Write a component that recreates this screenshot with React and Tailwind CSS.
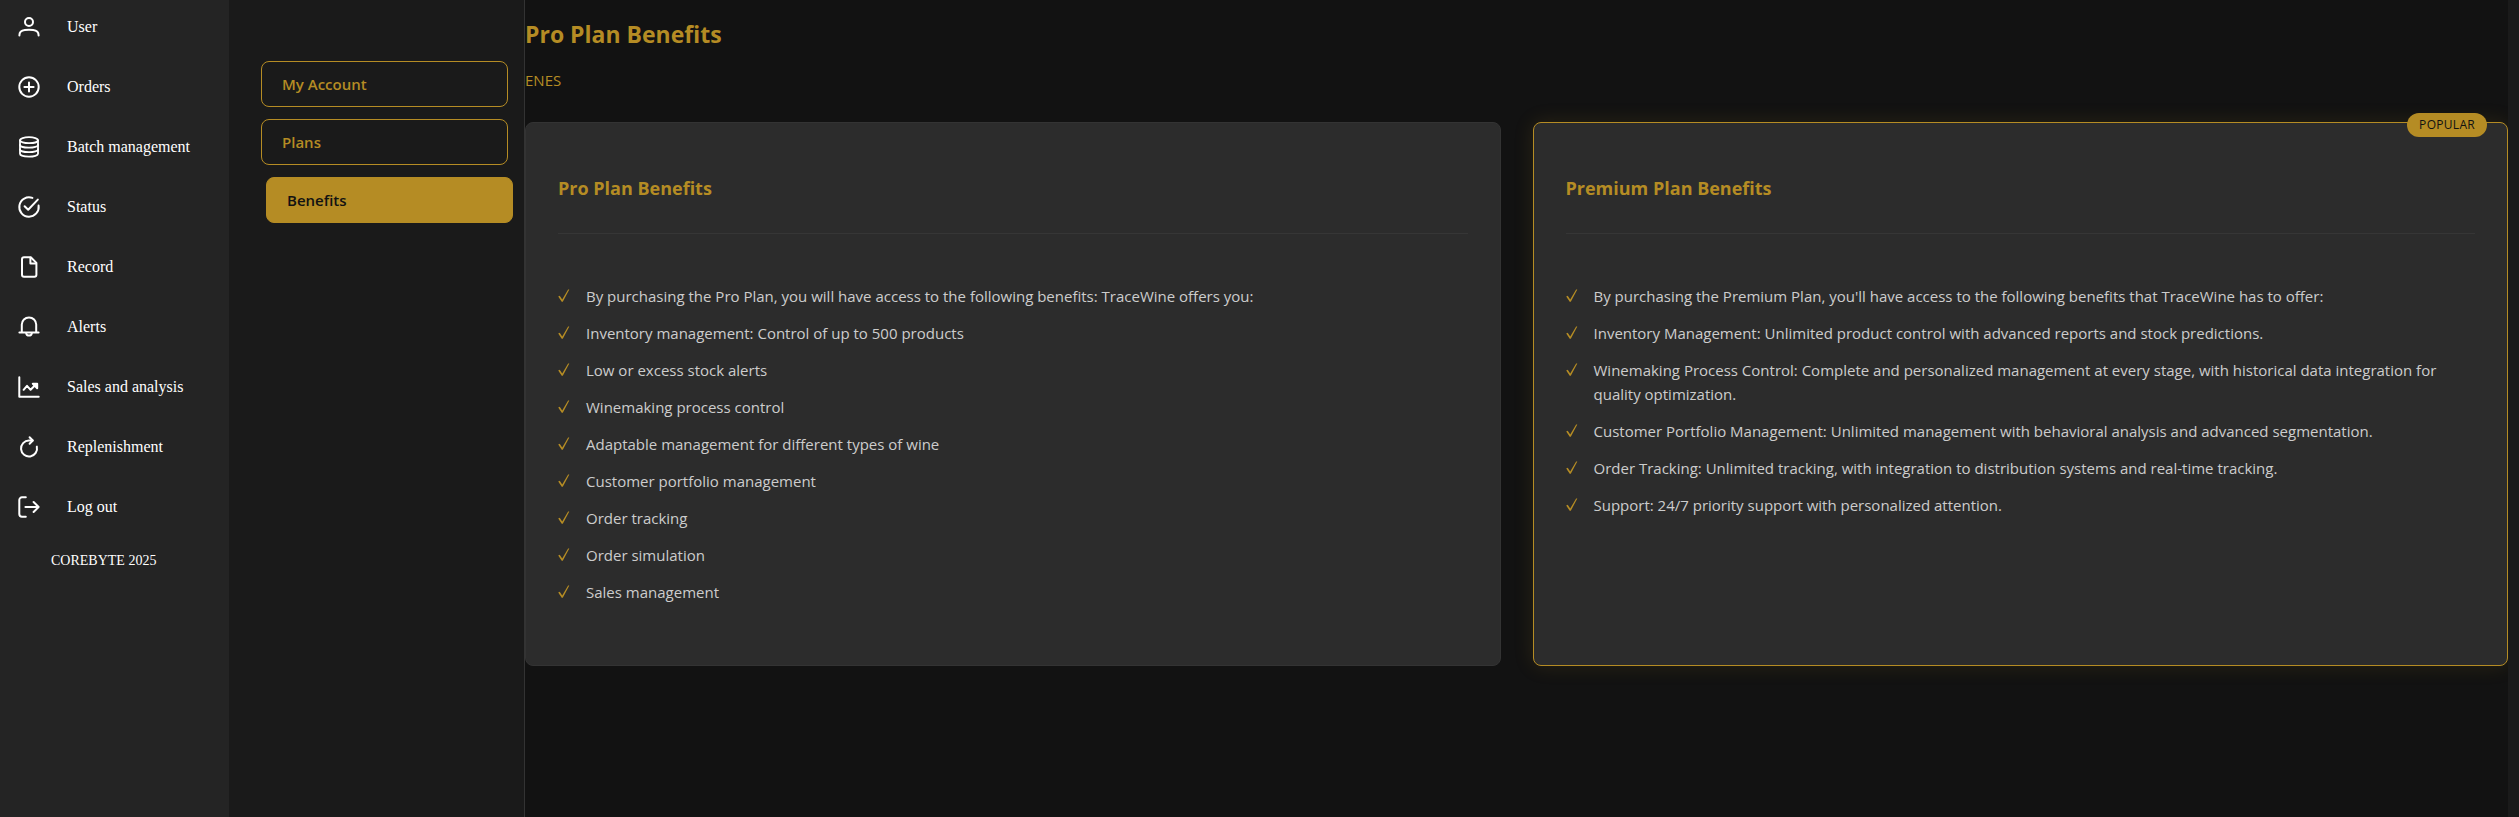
import React from "react";

const stroke = {
  fill: "none",
  stroke: "currentColor",
  strokeWidth: 2,
  strokeLinecap: "round",
  strokeLinejoin: "round",
};

const icons = {
  user: (
    <>
      <circle cx="12" cy="7" r="4" />
      <path d="M2.4 20.600v-.4c0-3.200 2.600-4.900 5.400-5.200 2.800-.3 5.600-.3 8.400 0 2.800.3 5.400 2 5.400 5.200v.4" />
    </>
  ),
  orders: (
    <>
      <circle cx="12" cy="12" r="9.7" />
      <path d="M12 7.400v9.200M7.400 12h9.200" />
    </>
  ),
  batch: (
    <g strokeWidth="1.800">
      <ellipse cx="12" cy="5.200" rx="9" ry="3" />
      <path d="M3 5.200v13.600c0 1.600 4 2.900 9 2.900s9-1.300 9-2.900V5.200" />
      <path d="M3 9.900c0 1.600 4 2.800 9 2.800s9-1.200 9-2.800" />
      <path d="M3 14.400c0 1.600 4 2.800 9 2.800s9-1.200 9-2.800" />
    </g>
  ),
  status: (
    <>
      <path d="M15.400 2.900A9.700 9.700 0 1 0 21.600 10.600" />
      <path d="M7.600 11.200l3.600 3.600L20.800 4.600" />
    </>
  ),
  record: (
    <>
      <path d="M13.800 2.300H7a2 2 0 0 0-2 2v15.400a2 2 0 0 0 2 2h10.400a2 2 0 0 0 2-2V7.900z" />
      <path d="M13.400 2.800v5.600h5.600" />
    </>
  ),
  alerts: (
    <>
      <path d="M2.400 17.400h19.200M4.800 17.200V9.600a7.200 7.200 0 0 1 14.400 0v7.600" />
      <path d="M9.200 18.400a2.900 2.900 0 0 0 5.600 0" />
    </>
  ),
  sales: (
    <>
      <path d="M2.300 2.300v19.400h19.400" />
      <path d="M6.600 14.800l3.400-4 3.600 4 5-5" />
      <path d="M15.800 8.800h4.400v4.400z" fill="currentColor" />
    </>
  ),
  replenish: (
    <>
      <path d="M19.800 11.600A8 8 0 1 1 12 5.500h3.600" />
      <path d="M12.600 2.300l3.200 3.200-3.200 3.200" />
    </>
  ),
  logout: (
    <>
      <path d="M8.800 2.300H5a2.700 2.700 0 0 0-2.700 2.700v14A2.700 2.700 0 0 0 5 21.700h3.800" />
      <path d="M8.400 12h13M16.600 7l5 5-5 5" />
    </>
  ),
};

const navItems = [
  ["user", "User"],
  ["orders", "Orders"],
  ["batch", "Batch management"],
  ["status", "Status"],
  ["record", "Record"],
  ["alerts", "Alerts"],
  ["sales", "Sales and analysis"],
  ["replenish", "Replenishment"],
  ["logout", "Log out"],
];

const proBenefits = [
  "By purchasing the Pro Plan, you will have access to the following benefits: TraceWine offers you:",
  "Inventory management: Control of up to 500 products",
  "Low or excess stock alerts",
  "Winemaking process control",
  "Adaptable management for different types of wine",
  "Customer portfolio management",
  "Order tracking",
  "Order simulation",
  "Sales management",
];

const premiumBenefits = [
  "By purchasing the Premium Plan, you'll have access to the following benefits that TraceWine has to offer:",
  "Inventory Management: Unlimited product control with advanced reports and stock predictions.",
  "Winemaking Process Control: Complete and personalized management at every stage, with historical data integration for quality optimization.",
  "Customer Portfolio Management: Unlimited management with behavioral analysis and advanced segmentation.",
  "Order Tracking: Unlimited tracking, with integration to distribution systems and real-time tracking.",
  "Support: 24/7 priority support with personalized attention.",
];

function Check() {
  return (
    <svg viewBox="0 0 12 24" className="h-6 w-3 shrink-0" aria-hidden="true">
      <path
        d="M.2 12.600l1.500-.8 2.500 3.800L10.100 5.500h1.200L4.800 17.800H3.700z"
        fill="#b58c24"
      />
    </svg>
  );
}

function BenefitCard({ title, items, popular }) {
  return (
    <section
      className={
        popular
          ? "relative rounded-lg border border-[#b58c24] bg-[#2c2c2c] px-8 pt-[50px] pb-[61px] shadow-[0_0_20px_rgba(181,140,36,0.15)]"
          : "relative rounded-lg border border-[#333333] bg-[#2c2c2c] px-8 pt-[50px] pb-[61px]"
      }
    >
      {popular && (
        <span className="absolute -top-2.5 right-5 rounded-full bg-[#b58c24] px-3 text-xs leading-6 font-medium tracking-wide text-[#121212]">
          POPULAR
        </span>
      )}
      <h2 className="border-b border-[#363636] pb-[30px] text-lg leading-[30px] font-bold text-[#b58c24]">
        {title}
      </h2>
      <ul className="mt-[50px] flex flex-col gap-[13px] text-[15px] leading-6 text-[#cccccc]">
        {items.map((item) => (
          <li key={item} className="flex gap-4">
            <Check />
            <span>{item}</span>
          </li>
        ))}
      </ul>
    </section>
  );
}

const tab =
  "h-[46px] rounded-lg border border-[#b58c24] px-5 text-left text-[15px] leading-6 font-semibold";

export default function App() {
  return (
    <div className="flex min-h-screen bg-[#1a1a1a] font-['Open_Sans','Noto_Sans',sans-serif]">
      <nav
        aria-label="Main"
        className="w-[229px] shrink-0 bg-[#242424] font-['Liberation_Serif',serif] text-base text-white"
      >
        <ul className="-mt-[3px]">
          {navItems.map(([icon, label]) => (
            <li key={icon}>
              <a href="#" className="flex h-[60px] items-center gap-[26px] pl-[17px]">
                <svg viewBox="0 0 24 24" className="size-6" aria-hidden="true" {...stroke}>
                  {icons[icon]}
                </svg>
                <span>{label}</span>
              </a>
            </li>
          ))}
        </ul>
        <p className="pt-3 pl-[51px] text-sm leading-6">COREBYTE 2025</p>
      </nav>

      <aside className="flex w-[296px] shrink-0 flex-col border-r border-[#333333] px-4 pt-[61px]">
        <nav aria-label="Account" className="flex flex-col gap-3 pl-4">
          <button type="button" className={`${tab} text-[#b58c24]`}>
            My Account
          </button>
          <button type="button" className={`${tab} text-[#b58c24]`}>
            Plans
          </button>
          <button
            type="button"
            className={`${tab} translate-x-[5px] bg-[#b58c24] text-[#121212]`}
          >
            Benefits
          </button>
        </nav>
      </aside>

      <main className="mr-[11px] min-w-0 flex-1 overflow-hidden bg-[#121212] text-[#b58c24]">
        <h1 className="pt-4 text-[23px] leading-9 font-bold">Pro Plan Benefits</h1>
        <div className="mt-4 flex text-[15px] leading-6">
          <button type="button">EN</button>
          <button type="button">ES</button>
        </div>
        <div className="mt-[30px] grid grid-cols-2 gap-8">
          <BenefitCard title="Pro Plan Benefits" items={proBenefits} />
          <BenefitCard title="Premium Plan Benefits" items={premiumBenefits} popular />
        </div>
      </main>
    </div>
  );
}
